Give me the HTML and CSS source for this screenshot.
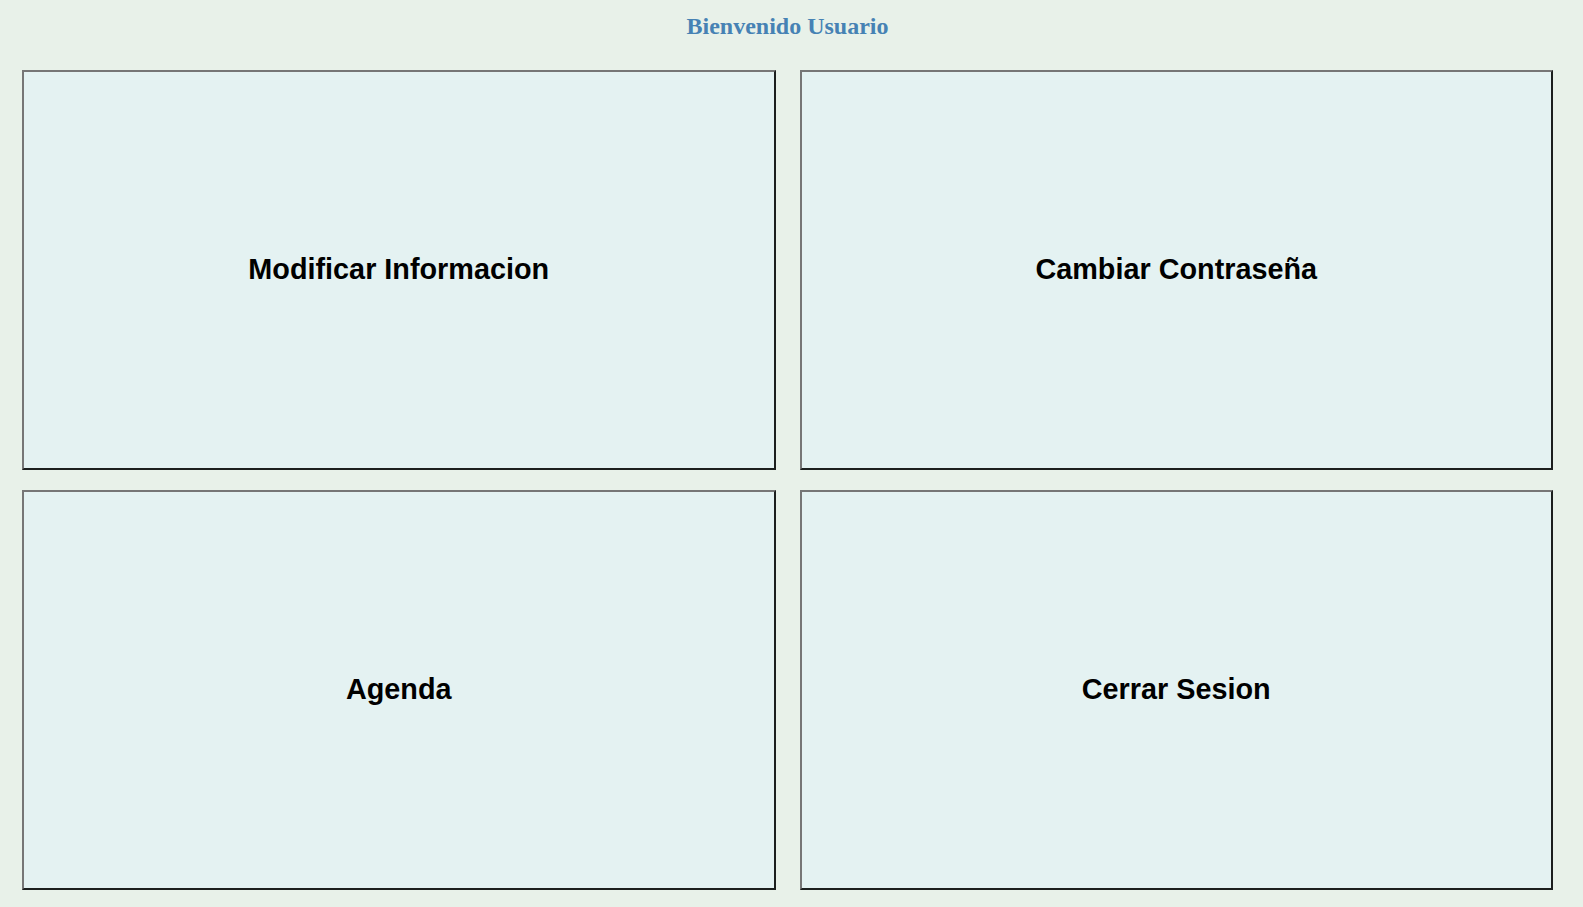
FILE: index.html
```html
<!DOCTYPE html>
<html lang="es">
<head>
<meta charset="utf-8">
<title>Bienvenido Usuario</title>
<link rel="stylesheet" href="styles.css">
</head>
<body>
<div class="page">
  <h2 class="title">Bienvenido Usuario</h2>
  <div class="menu">
    <button class="tile">Modificar Informacion</button>
    <button class="tile">Cambiar Contraseña</button>
    <button class="tile">Agenda</button>
    <button class="tile">Cerrar Sesion</button>
  </div>
</div>
</body>
</html>
```
FILE: styles.css
```css
html, body {
  margin: 0;
  padding: 0;
  background: #e8f1e9;
}
.page {
  padding: 12px 30px 0 22px;
  height: 907px;
  box-sizing: border-box;
  overflow: hidden;
}
.title {
  margin: 0;
  height: 58px;
  line-height: 28px;
  text-align: center;
  font-family: "Liberation Serif", "Times New Roman", serif;
  font-size: 24px;
  font-weight: bold;
  color: #4682b4;
}
.menu {
  display: grid;
  grid-template-columns: 1fr 1fr;
  grid-template-rows: 400px 400px;
  column-gap: 24px;
  row-gap: 20px;
}
.tile {
  margin: 0;
  background: #e4f2f2;
  border-style: solid;
  border-width: 2px;
  border-color: #767676 #1c1f1e #1c1f1e #767676;
  font-family: "Liberation Sans", Arial, sans-serif;
  font-size: 28.8px;
  font-weight: bold;
  color: #000;
  display: flex;
  align-items: center;
  justify-content: center;
  padding: 0 0 2px;
  cursor: pointer;
}
```
